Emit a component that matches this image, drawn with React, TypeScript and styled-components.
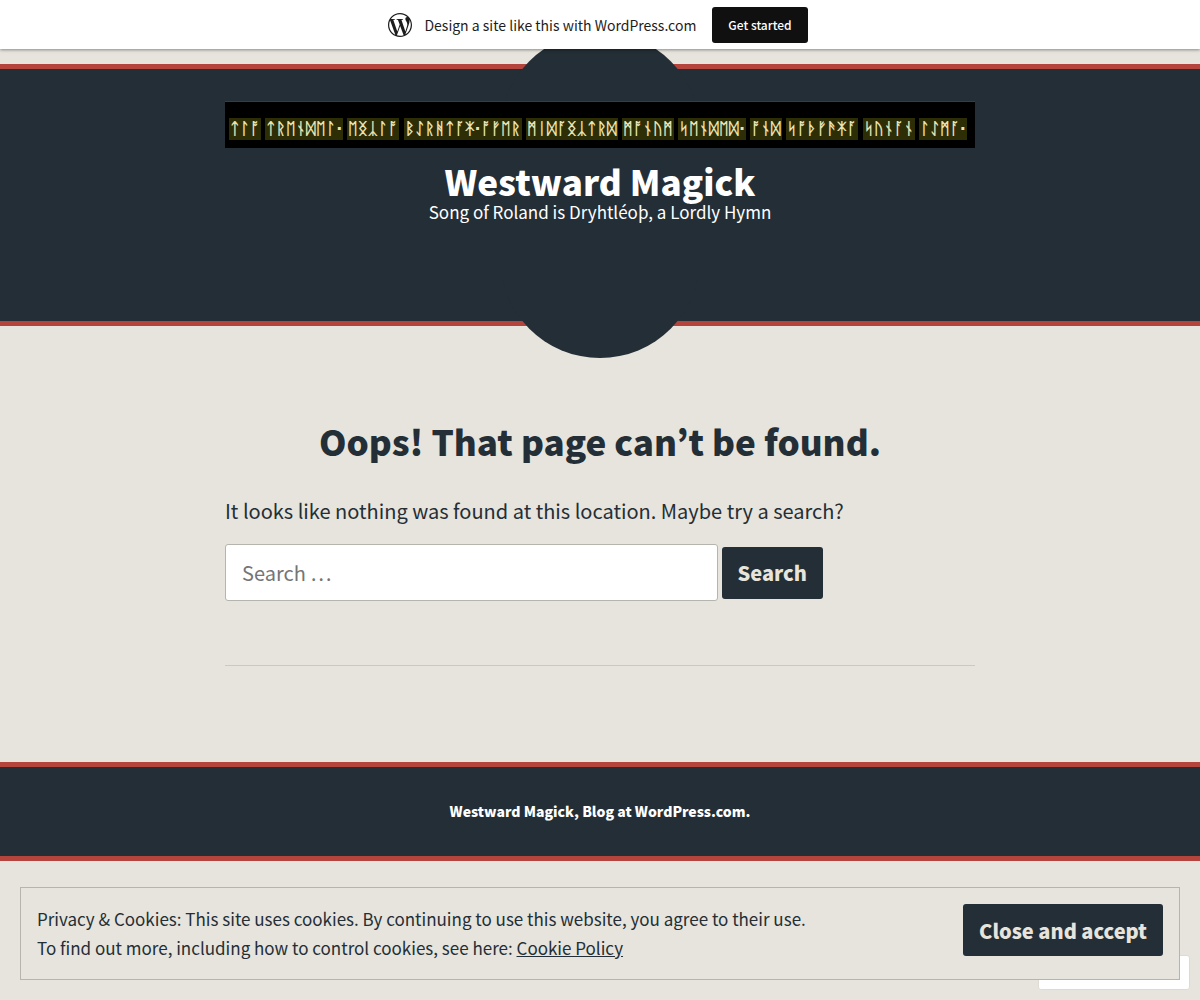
import React from "react";
import styled, { createGlobalStyle, css } from "styled-components";
import { SiWordpress } from "react-icons/si";

const ink = "#242e36";
const sand = "#e6e4dc";
const red = "#b5443c";
const sans = `"Noto Sans CJK SC", "Open Sans", sans-serif`;
const display = `"Noto Sans CJK KR", "Open Sans", sans-serif`;

const GlobalStyle = createGlobalStyle`
  *, *::before, *::after { box-sizing: border-box; }
  body {
    margin: 0;
    background: ${sand};
    color: ${ink};
    font-family: ${sans};
    font-size: 20px;
    line-height: 32px;
  }
`;

const Banner = styled.aside`
  position: sticky;
  top: 0;
  z-index: 3;
  display: flex;
  align-items: center;
  justify-content: center;
  gap: 12px;
  height: 49px;
  padding-right: 4px;
  background: #fff;
  color: #1d1d1d;
  box-shadow: 0 1px 3px rgba(0, 0, 0, 0.4);
  font-size: 14px;
  line-height: 20px;
`;

const BannerText = styled.span`
  margin-right: 4px;
`;

const BannerButton = styled.button`
  height: 36px;
  padding: 0 16px;
  border: 0;
  border-radius: 3px;
  background: #101010;
  color: #fff;
  font-family: ${sans};
  font-size: 12px;
  font-weight: 500;
`;

const bar = css`
  border: solid ${red};
  border-width: 5px 0;
  background: ${ink};
  color: #fff;
  text-align: center;
`;

const Header = styled.header`
  ${bar}
  position: relative;
  margin-top: 15px;
  padding: 32px 20px 97px;

  &::before {
    content: "";
    position: absolute;
    top: -37px;
    bottom: -37px;
    left: calc(50% - 100px);
    width: 200px;
    border-radius: 100px;
    background: ${ink};
  }
`;

const Column = styled.div`
  position: relative;
  width: 100%;
  max-width: 750px;
  margin: 0 auto;
`;

const RuneStrip = styled.div`
  display: flex;
  justify-content: space-between;
  align-items: center;
  height: 47px;
  margin-bottom: 14px;
  padding: 8px 4px 0;
  border-top: 1px solid #3c3c3c;
  background: #000;
  color: #e8e3b4;
  font-family: "DejaVu Sans", sans-serif;
  font-size: 16px;
  line-height: 22px;
  font-weight: 700;
`;

const RuneWord = styled.span`
  padding: 0 1px;
  background: #2d2d06;

  &:last-child {
    margin-right: 4px;
  }
`;

const SiteTitle = styled.h1`
  margin: 0;
  font-family: ${display};
  font-size: 35px;
  line-height: 38px;
  font-weight: 900;
`;

const Tagline = styled.p`
  margin: 0;
  font-size: 17px;
  line-height: 24px;
`;

const Main = styled.main`
  padding: 88px 20px 96px;
`;

const PageTitle = styled.h2`
  margin: 0 0 27px;
  font-family: ${display};
  font-size: 35px;
  line-height: 54px;
  font-weight: 900;
  text-align: center;
`;

const Lead = styled.p`
  margin: 0 0 17px;
`;

const SearchForm = styled.form`
  display: flex;
  align-items: center;
  gap: 4px;
  max-width: 598px;
`;

const SearchInput = styled.input`
  flex: 1;
  min-width: 0;
  height: 57px;
  padding: 0 16px;
  border: 1px solid #b5b5ae;
  border-radius: 3px;
  background: #fff;
  color: ${ink};
  font-family: ${sans};
  font-size: 20px;

  &::placeholder {
    color: #757575;
  }
`;

const Button = styled.button`
  flex: none;
  height: 52px;
  padding: 0 16px;
  border: 0;
  border-radius: 3px;
  background: ${ink};
  color: ${sand};
  font-family: ${sans};
  font-size: 20px;
  font-weight: 900;
`;

const Rule = styled.hr`
  height: 1px;
  margin: 64px 0 0;
  border: 0;
  background: #cbc9c2;
`;

const Footer = styled.footer`
  ${bar}
  padding: 32px 20px 33px;
  font-size: 14px;
  line-height: 24px;
  font-weight: 900;

  a {
    color: inherit;
    text-decoration: none;
  }
`;

const Follow = styled.button`
  position: fixed;
  right: 10px;
  bottom: 10px;
  z-index: 1;
  display: flex;
  align-items: center;
  width: 152px;
  height: 35px;
  padding: 0 20px;
  border: 1px solid #dddbd3;
  border-radius: 3px;
  background: #fff;
  color: #50575e;
`;

const Cookies = styled.section`
  position: fixed;
  right: 20px;
  bottom: 20px;
  left: 20px;
  z-index: 2;
  display: flex;
  align-items: flex-start;
  justify-content: space-between;
  gap: 16px;
  padding: 16px 16px 17px;
  border: 1px solid #b5b5ae;
  background: ${sand};
  font-size: 17px;
  line-height: 29px;

  p {
    margin: 0;
  }

  a {
    color: inherit;
  }
`;

const runes = ["ᛏᛚᚩ", "ᛏᚱᛖᚾᛞᛖᛚ·", "ᛖᛝᛣᛚᚩ", "ᛒᛇᚱᚻᛏᚪᛡ·ᚩᚠᛖᚱ", "ᛗᛁᛞᚪᛝᛣᛏᚱᛞ", "ᛗᚩᚾᚢᛗ", "ᛋᛖᚾᛞᛖᛞ·", "ᚩᚾᛞ", "ᛋᚩᚦᚠᚫᛡᚪ", "ᛋᚢᚾᚪᚾ", "ᛚᛇᛗᚪ·"];

export default function App() {
  return (
    <>
      <GlobalStyle />
      <Banner>
        <SiWordpress size={24} />
        <BannerText>Design a site like this with WordPress.com</BannerText>
        <BannerButton type="button">Get started</BannerButton>
      </Banner>
      <Header>
        <Column>
          <RuneStrip>
            {runes.map((word) => (
              <RuneWord key={word}>{word}</RuneWord>
            ))}
          </RuneStrip>
          <SiteTitle>Westward Magick</SiteTitle>
          <Tagline>Song of Roland is Dryhtléoþ, a Lordly Hymn</Tagline>
        </Column>
      </Header>
      <Main>
        <Column>
          <PageTitle>Oops! That page can’t be found.</PageTitle>
          <Lead>It looks like nothing was found at this location. Maybe try a search?</Lead>
          <SearchForm role="search" onSubmit={(e) => e.preventDefault()}>
            <SearchInput type="search" placeholder="Search …" aria-label="Search for:" />
            <Button type="submit">Search</Button>
          </SearchForm>
          <Rule />
        </Column>
      </Main>
      <Footer>
        <a href="#home">Westward Magick</a>, <a href="#wordpress">Blog at WordPress.com.</a>
      </Footer>
      <Follow type="button" aria-label="Follow">
        <svg width="16" height="16" viewBox="0 0 16 16" fill="none" stroke="currentColor" aria-hidden="true">
          <path d="M3 1h10v10H9l-2 4V11H3z" />
        </svg>
      </Follow>
      <Cookies>
        <div>
          <p>Privacy &amp; Cookies: This site uses cookies. By continuing to use this website, you agree to their use.</p>
          <p>
            To find out more, including how to control cookies, see here: <a href="#cookies">Cookie Policy</a>
          </p>
        </div>
        <Button type="button">Close and accept</Button>
      </Cookies>
    </>
  );
}
